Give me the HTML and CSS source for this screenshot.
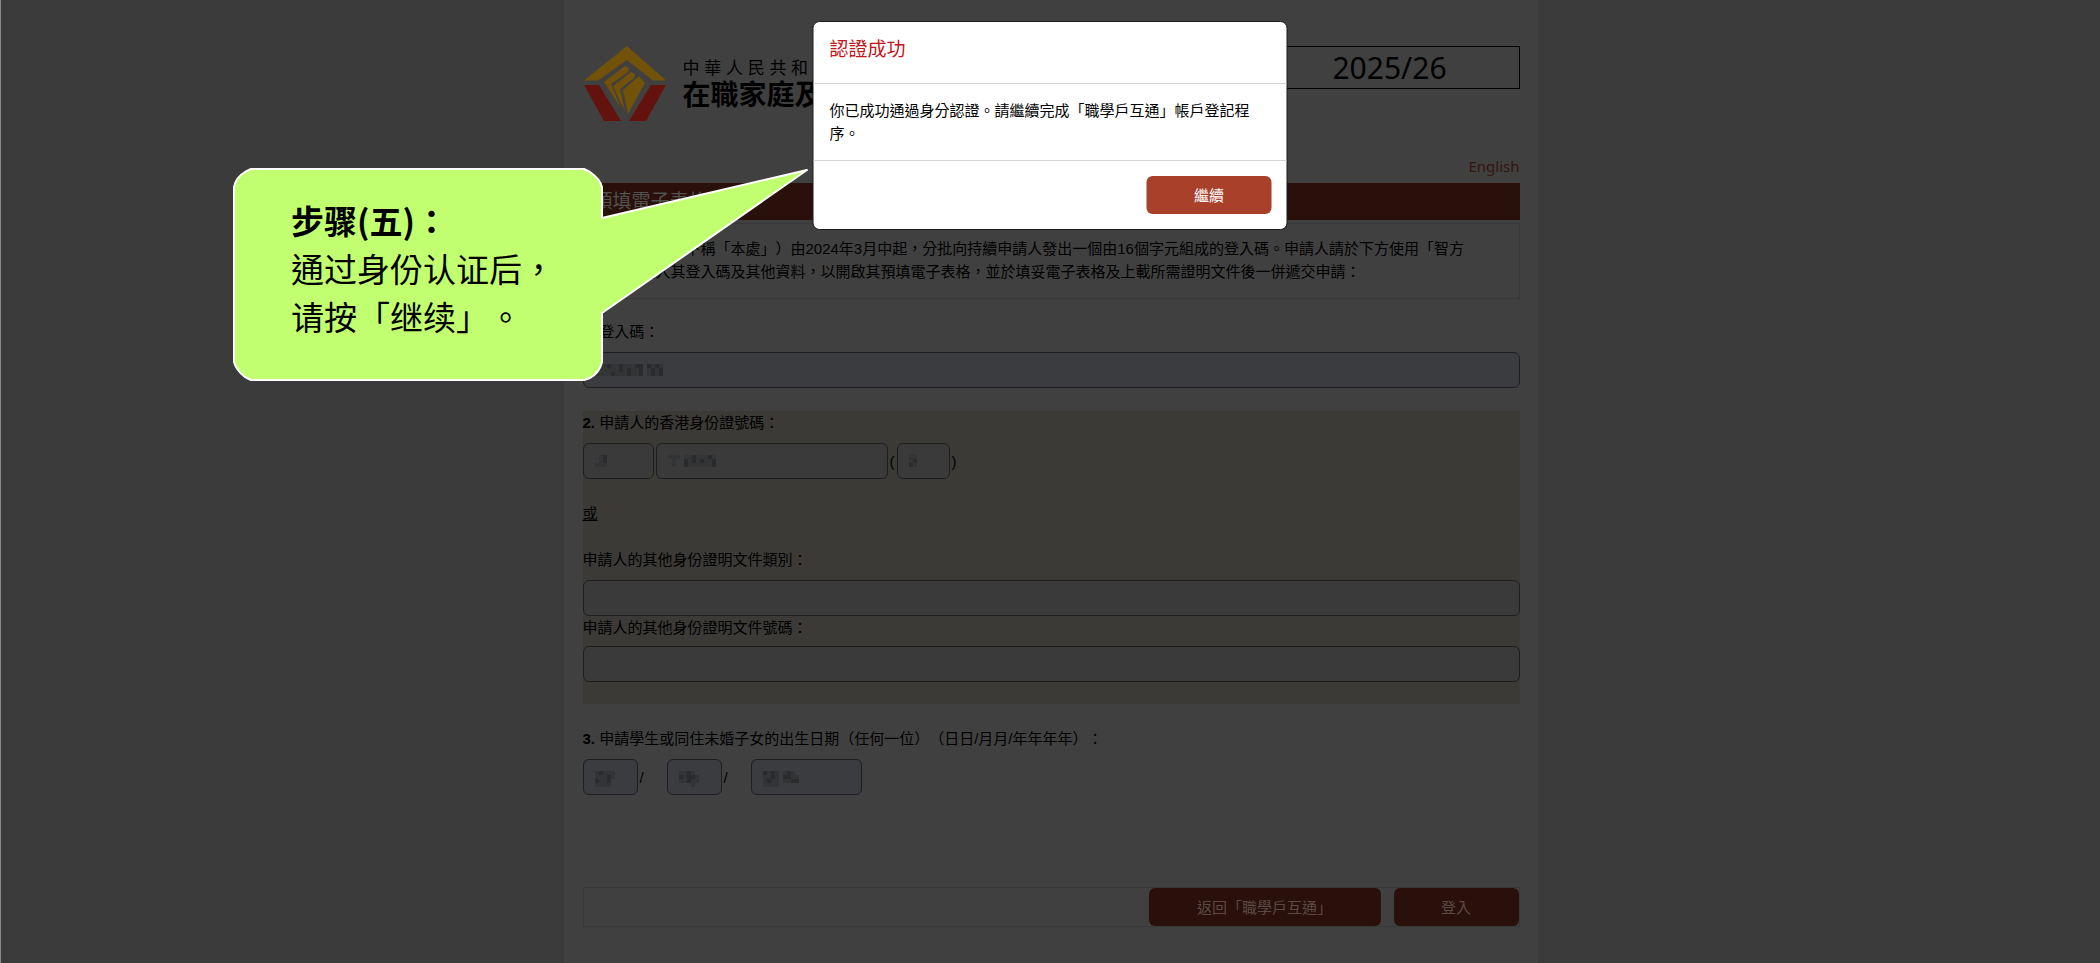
FILE: index.html
```html
<!DOCTYPE html>
<html lang="zh-Hant">
<head>
<meta charset="utf-8">
<meta name="viewport" content="width=device-width, initial-scale=1">
<title>認證成功</title>
<link rel="stylesheet" href="styles.css">
</head>
<body>
<div class="page">
  <header class="masthead">
    <div class="brand">
      <svg class="brand-logo" viewBox="0 0 82 76" aria-hidden="true">
        <path class="logo-gold" d="M43 0 82 34.500H69L43 14 14 34.500H0Z"/>
        <path class="logo-gold" d="M20 36 41 20 45 22 44 26 27 38 37 62Z"/>
        <path class="logo-gold" d="M29 40 47 26 51 28 50 32 36 43 41 64 37 58Z"/>
        <path class="logo-gold" d="M39 44 55 30 61 37 44 68Z"/>
        <path class="logo-red" d="M0 39H15L37 75H20Z"/>
        <path class="logo-red" d="M82 39H67L45 75H62Z"/>
      </svg>
      <div class="brand-text">
        <span class="brand-gov">中 華 人 民 共 和 國 香 港</span>
        <span class="brand-name">在職家庭及學生資助</span>
      </div>
    </div>
    <div class="year">2025/26</div>
  </header>
  <nav class="lang"><a class="lang-link" href="#">English</a></nav>

  <h1 class="banner">預填電子表格</h1>
  <div class="intro">學生資助處（下稱「本處」）由2024年3月中起，分批向持續申請人發出一個由16個字元組成的登入碼。申請人請於下方使用「智方<br>便」，輸入其登入碼及其他資料，以開啟其預填電子表格，並於填妥電子表格及上載所需證明文件後一併遞交申請：</div>

  <form class="form">
    <div class="group group-code">
      <label class="label" for="code"><b>1.</b> 登入碼：</label>
      <div class="field">
        <input class="input filled" id="code" type="text">
        <svg class="mask" width="68" height="16" viewBox="0 0 17 4" aria-hidden="true">
          <path class="mask-a" d="M0 0h12v3h-12zM13 0h4v3h-4z"/>
          <path class="mask-b" d="M3 0h1v1h-1zM4 2h1v1h-1zM6 0h1v2h-1zM8 1h1v2h-1zM10 0h2v1h-2zM11 1h1v2h-1zM13 0h1v1h-1zM14 1h1v2h-1zM15 0h1v1h-1zM16 1h1v2h-1z"/>
        </svg>
      </div>
    </div>

    <fieldset class="group group-id">
      <label class="label" for="id-a"><b>2.</b> 申請人的香港身份證號碼：</label>
      <div class="row">
        <div class="field w-prefix">
          <input class="input" id="id-a" type="text">
          <svg class="mask" width="12" height="16" viewBox="0 0 3 4" aria-hidden="true"><path class="mask-a" d="M1 0h2v3h-3v-1h1z"/><path class="mask-b" d="M2 0h1v2h-1z"/></svg>
        </div>
        <div class="field w-number">
          <input class="input" type="text" aria-label="身份證號碼數字">
          <svg class="mask" width="48" height="16" viewBox="0 0 12 4" aria-hidden="true"><path class="mask-a" d="M0 0h3v1h-1v2h-1v-2h-1zM4 0h8v3h-8z"/><path class="mask-b" d="M4 1h1v2h-1zM6 0h1v2h-1zM8 1h1v1h-1zM10 0h1v1h-1zM11 1h1v2h-1z"/></svg>
        </div>
        <span>(</span>
        <div class="field w-check">
          <input class="input" type="text" aria-label="校驗碼">
          <svg class="mask" width="8" height="16" viewBox="0 0 2 4" aria-hidden="true"><path class="mask-a" d="M0 0h2v3h-2z"/><path class="mask-b" d="M1 1h1v1h-1zM0 2h1v1h-1z"/></svg>
        </div>
        <span>)</span>
      </div>
      <p class="or">或</p>
      <label class="label" for="doc-type">申請人的其他身份證明文件類別：</label>
      <input class="input" id="doc-type" type="text">
      <label class="label label-tight" for="doc-no">申請人的其他身份證明文件號碼：</label>
      <input class="input" id="doc-no" type="text">
    </fieldset>

    <div class="group group-dob">
      <label class="label" for="dd"><b>3.</b> 申請學生或同住未婚子女的出生日期（任何一位）（日日/月月/年年年年）：</label>
      <div class="row">
        <div class="field w-day">
          <input class="input filled" id="dd" type="text">
          <svg class="mask" width="20" height="16" viewBox="0 0 5 4" aria-hidden="true"><path class="mask-a" d="M0 0h5v2h-1v2h-4z"/><path class="mask-b" d="M1 0h1v1h-1zM0 2h1v1h-1zM3 1h1v2h-1z"/></svg>
        </div>
        <span class="slash">/</span>
        <div class="field w-day">
          <input class="input filled" type="text" aria-label="月">
          <svg class="mask" width="20" height="16" viewBox="0 0 5 4" aria-hidden="true"><path class="mask-a" d="M0 0h4v1h1v2h-1v1h-1v-1h-3z"/><path class="mask-b" d="M0 1h1v1h-1zM2 0h1v3h-1zM3 1h1v1h-1z"/></svg>
        </div>
        <span class="slash">/</span>
        <div class="field w-year">
          <input class="input filled" type="text" aria-label="年">
          <svg class="mask" width="36" height="16" viewBox="0 0 9 4" aria-hidden="true"><path class="mask-a" d="M0 0h4v4h-4zM5 0h3v1h1v2h-4z"/><path class="mask-b" d="M0 0h1v1h-1zM1 2h1v1h-1zM2 0h1v2h-1zM5 1h1v1h-1zM6 0h1v2h-1zM7 2h2v1h-2z"/></svg>
        </div>
      </div>
    </div>

    <div class="actions">
      <button class="btn btn-dim btn-wide" type="button">返回「職學戶互通」</button>
      <button class="btn btn-dim" type="button">登入</button>
    </div>
  </form>
</div>

<section class="modal" role="dialog" aria-labelledby="modal-title">
  <h2 class="modal-title" id="modal-title">認證成功</h2>
  <p class="modal-body">你已成功通過身分認證。請繼續完成「職學戶互通」帳戶登記程序。</p>
  <div class="modal-footer"><button class="btn" type="button">繼續</button></div>
</section>

<aside class="callout">
  <svg class="callout-shape" viewBox="0 0 576 214" aria-hidden="true">
    <path d="M18 1H351L357 4Q367 11 369 19V50L574 2 369 145V194Q367 204 357 210L351 212H18L12 209Q3 202 1 194V19Q3 9 12 4Z"/>
  </svg>
  <div class="callout-text"><strong>步骤(五)：</strong><br>通过身份认证后，<br>请按「继续」。</div>
</aside>
</body>
</html>
```
FILE: styles.css
```css
* { box-sizing: border-box; }
body {
  margin: 0;
  min-height: 100vh;
  background: #3b3b3b;
  border-left: 1px solid #8a8a8a;
  border-bottom: 1px solid #3a2c2c;
  color: #000;
  font: 15px/23px "Liberation Sans", "Noto Sans CJK TC", sans-serif;
  text-spacing-trim: space-all;
}
.page {
  max-width: 974px;
  min-height: calc(100vh - 1px);
  margin: 0 auto;
  padding: 46px 18px 36px 19px;
  background: #404040;
}
.masthead { display: flex; justify-content: space-between; align-items: flex-start; height: 108px; }
.brand { display: flex; gap: 17px; padding-left: 1px; }
.brand-logo { width: 82px; height: 76px; }
.logo-gold { fill: #725108; }
.logo-red { fill: #64120d; }
.brand-text { display: flex; flex-direction: column; padding-top: 12px; white-space: nowrap; }
.brand-gov { font-size: 17px; line-height: 22px; }
.brand-name { font-size: 28px; line-height: 32px; font-weight: 700; }
.year {
  width: 260px;
  border: 1px solid #000;
  font: 30px/41px "Noto Sans", sans-serif;
  text-align: center;
}
.lang { text-align: right; height: 29px; }
.lang-link { color: #35150f; text-decoration: none; font: 15px/24px "Noto Sans", sans-serif; }
.banner {
  margin: 0;
  padding: 0 11px;
  background: #2a100a;
  color: #505050;
  font-size: 19px;
  line-height: 37px;
  font-weight: 400;
}
.intro { margin-top: 3px; padding: 13px 12px 15px; border: 1px solid #383838; }
.form { margin: 0; }
.group { margin: 0; padding: 0; border: 0; min-width: 0; }
.group-code { padding-top: 21px; }
.label { display: block; margin-bottom: 9px; }
.group-id { margin-top: 23px; padding-bottom: 22px; background: #3b3a36; }
.group-dob { padding-top: 23px; }
.row { display: flex; align-items: center; gap: 2px; }
.field { position: relative; }
.input {
  display: block;
  width: 100%;
  height: 36px;
  padding: 0 12px;
  border: 1px solid #1e1e20;
  border-radius: 6px;
  background: #3a3a3a;
  color: #2a2a2c;
  font: inherit;
}
.filled { background: #3a3c40; }
.mask { position: absolute; left: 12px; top: 12px; shape-rendering: crispEdges; }
.mask-a { fill: #333436; }
.mask-b { fill: #2a2b2d; }
.w-prefix { width: 71px; }
.w-number { width: 232px; }
.w-check { width: 53px; }
.w-day { width: 55px; }
.w-year { width: 111px; }
.slash { width: 25px; }
.or { margin: 23px 0; text-decoration: underline; }
.label-tight { margin-bottom: 7px; }
.actions { display: flex; justify-content: flex-end; gap: 13px; margin-top: 92px; border: 1px solid #383838; }
.btn {
  width: 125px;
  height: 38px;
  border: 0;
  border-radius: 6px;
  background: #a8402a;
  color: #fff;
  font: inherit;
}
.btn-dim { background: #2a100a; color: #5a4a46; }
.btn-wide { width: 232px; }
.modal {
  position: absolute;
  top: 21px;
  left: 50%;
  transform: translateX(-50%);
  width: 475px;
  border: 1px solid #1a1a1a;
  border-radius: 7px;
  background: #fff;
}
.modal-title {
  margin: 0;
  padding: 16px 16px 22px;
  border-bottom: 1px solid #d3d6d9;
  color: #c0161c;
  font-size: 19px;
  line-height: 23px;
  font-weight: 400;
}
.modal-body { margin: 0; padding: 15px 16px; border-bottom: 1px solid #d3d6d9; }
.modal-footer { display: flex; justify-content: flex-end; padding: 15px; }
.callout { position: absolute; top: 168px; left: 233px; width: 576px; height: 214px; }
.callout-shape { position: absolute; inset: 0; width: 576px; height: 214px; fill: #c1ff70; stroke: #fff; stroke-width: 2; stroke-linejoin: round; }
.callout-text { position: relative; padding: 28px 0 0 58px; font: 33px/48px "Noto Sans CJK TC", sans-serif; }
```
